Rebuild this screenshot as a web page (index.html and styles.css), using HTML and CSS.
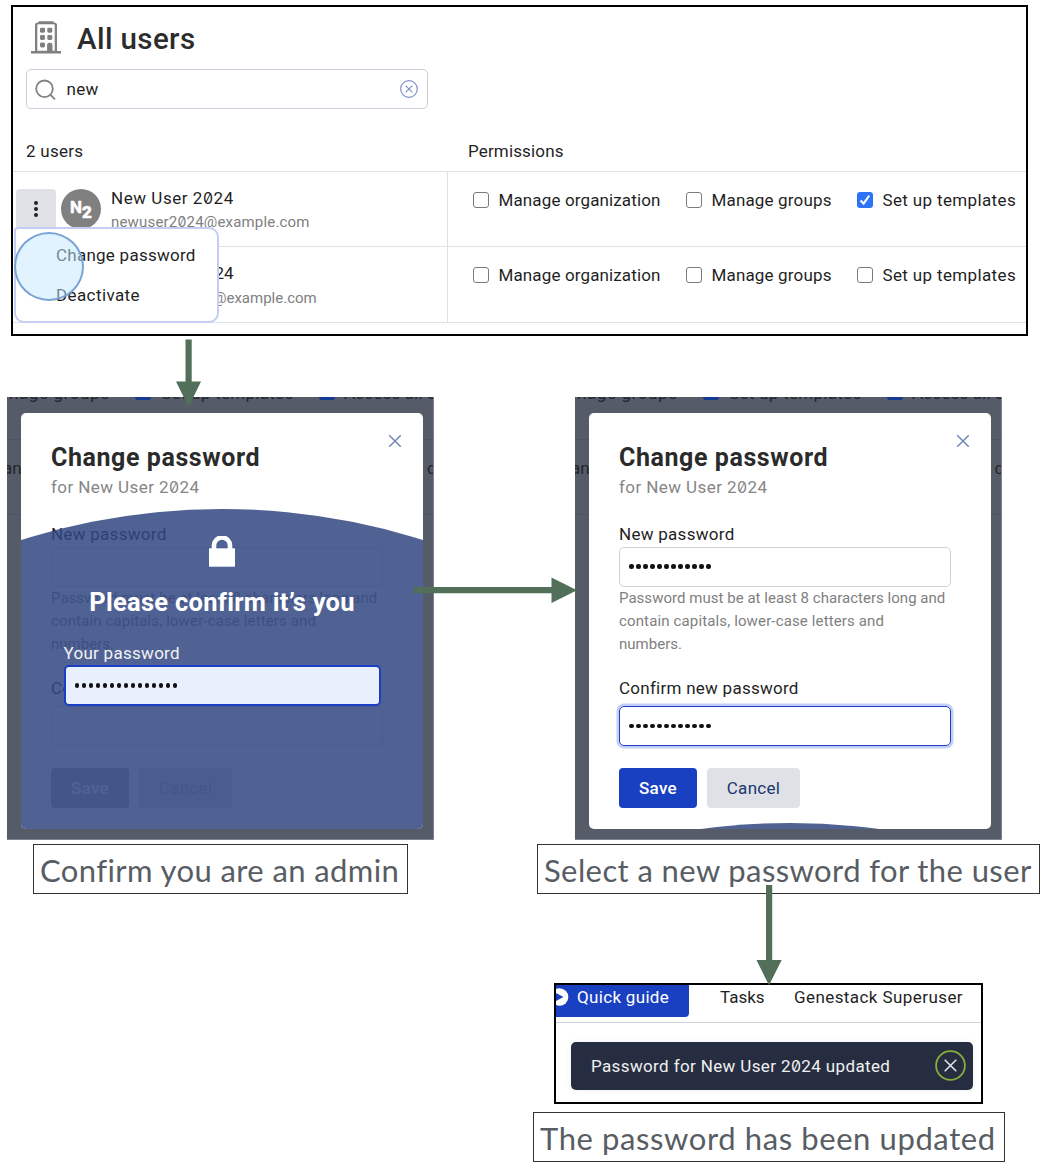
FILE: index.html
```html
<!DOCTYPE html>
<html lang="en">
<head>
<meta charset="utf-8">
<title>Changing a user password</title>
<link rel="stylesheet" href="styles.css">
</head>
<body>
<main class="canvas">

  <section class="node users">
    <header class="users-head">
      <svg class="building" width="30" height="33" viewBox="0 0 30 33" fill="#808080">
        <path fill-rule="evenodd" d="M4 30V4Q4 1.6 7 1.4L8 .3H22L23 1.4Q26 1.6 26 4V30H30V32.5H0V30ZM6.3 29.8H16.3V24Q16.3 21.8 18.8 21.8Q21.3 21.8 21.3 24V29.8H23.7V4Q23.7 3.2 22.8 3.2H7.2Q6.3 3.2 6.3 4Z"/>
        <path d="M16.3 30V24Q16.3 21.7 18.8 21.7Q21.3 21.7 21.3 24V30Z"/>
        <rect x="9" y="6.7" width="5" height="5" rx="1.4"/><rect x="16.3" y="6.7" width="5" height="5" rx="1.4"/>
        <rect x="9" y="14" width="5" height="5" rx="1.4"/><rect x="16.3" y="14" width="5" height="5" rx="1.4"/>
        <rect x="9" y="21.5" width="5" height="5" rx="1.4"/>
      </svg>
      <h1 class="users-title">All users</h1>
    </header>
    <div class="search">
      <svg width="22" height="22" viewBox="0 0 22 22" fill="none" stroke="#808080" stroke-width="1.8"><circle cx="9.5" cy="10.8" r="8.3"/><path d="M15.3 16.6L20 21.3"/></svg>
      <span class="search-text">new</span>
      <svg width="18" height="18" viewBox="0 0 18 18" fill="none" stroke="#7f93c4" stroke-width="1.2"><circle cx="9" cy="9" r="8.3"/><path d="M5.6 5.6L12.4 12.4M12.4 5.6L5.6 12.4"/></svg>
    </div>
    <div class="columns">
      <span class="count">2 users</span>
      <span class="perm-head">Permissions</span>
    </div>
    <div class="row">
      <div class="who">
        <span class="more"><i></i><i></i><i></i></span>
        <span class="avatar">N<b>2</b></span>
        <div class="id"><div class="name">New User 2<span class="z">0</span>24</div><div class="mail">newuser2<span class="z">0</span>24@example.com</div></div>
      </div>
      <div class="perms">
        <span class="box"></span><span class="p-org">Manage organization</span>
        <span class="box"></span><span class="p-grp">Manage groups</span>
        <span class="box on"><svg width="16" height="16" viewBox="0 0 16 16" fill="none" stroke="#fff" stroke-width="2.1"><path d="M3.6 8.6L6.6 11.6L12.2 3.6"/></svg></span><span class="p-tpl">Set up templates</span>
      </div>
    </div>
    <div class="row last">
      <div class="who second">
        <div class="id"><div class="name">24</div><div class="mail">@example.com</div></div>
      </div>
      <div class="perms">
        <span class="box"></span><span class="p-org">Manage organization</span>
        <span class="box"></span><span class="p-grp">Manage groups</span>
        <span class="box"></span><span class="p-tpl">Set up templates</span>
      </div>
    </div>
    <div class="menu">
      <div class="menu-item m1">Change password</div>
      <div class="menu-item m2">Deactivate</div>
    </div>
    <span class="pointer"></span>
  </section>

  <section class="node screen screen-a">
    <div class="behind">
      <div class="behind-perms"><span class="b-grp">nage groups</span><i></i><span class="b-tpl">Set up templates</span><i></i><span class="b-acc">Access all s</span></div>
      <div class="behind-row"><span>an</span><span>c</span></div>
    </div>
    <div class="modal locked">
      <svg class="close" width="14" height="14" viewBox="0 0 14 14" stroke="#7488b8" stroke-width="1.5"><path d="M1.2 1.2L12.8 12.8M12.8 1.2L1.2 12.8"/></svg>
      <h2 class="modal-title">Change password</h2>
      <p class="modal-sub">for New User 2<span class="z">0</span>24</p>
      <div class="label l-new">New password</div>
      <div class="input"></div>
      <p class="help"><span>Password must be at least 8 characters long and</span><br><span class="h2">contain capitals, lower-case letters and</span><br>numbers.</p>
      <div class="label l-conf">Confirm new password</div>
      <div class="input"></div>
      <div class="buttons"><span class="btn save">Save</span><span class="btn cancel">Cancel</span></div>
      <div class="dome"></div>
      <div class="confirm">
        <svg class="lock" width="26" height="31" viewBox="0 0 26 31"><path d="M5 13V9.5A8 8 0 0 1 21 9.5V13" fill="none" stroke="#fff" stroke-width="4.6"/><path d="M0 12.3H26V30.7H0Z" fill="#fff"/></svg>
        <h3 class="confirm-title">Please confirm it’s you</h3>
        <div class="label confirm-label">Your password</div>
        <div class="input filled"><span class="dots"><i></i><i></i><i></i><i></i><i></i><i></i><i></i><i></i><i></i><i></i><i></i><i></i><i></i><i></i><i></i></span></div>
      </div>
    </div>
  </section>

  <section class="node screen screen-b">
    <div class="behind">
      <div class="behind-perms"><span class="b-grp">nage groups</span><i></i><span class="b-tpl">Set up templates</span><i></i><span class="b-acc">Access all s</span></div>
      <div class="behind-row"><span>an</span><span>d</span></div>
    </div>
    <div class="modal">
      <svg class="close" width="14" height="14" viewBox="0 0 14 14" stroke="#7488b8" stroke-width="1.5"><path d="M1.2 1.2L12.8 12.8M12.8 1.2L1.2 12.8"/></svg>
      <h2 class="modal-title">Change password</h2>
      <p class="modal-sub">for New User 2<span class="z">0</span>24</p>
      <div class="label l-new">New password</div>
      <div class="input"><span class="dots"><i></i><i></i><i></i><i></i><i></i><i></i><i></i><i></i><i></i><i></i><i></i><i></i></span></div>
      <p class="help"><span>Password must be at least 8 characters long and</span><br><span class="h2">contain capitals, lower-case letters and</span><br>numbers.</p>
      <div class="label l-conf">Confirm new password</div>
      <div class="input focus"><span class="dots"><i></i><i></i><i></i><i></i><i></i><i></i><i></i><i></i><i></i><i></i><i></i><i></i></span></div>
      <div class="buttons"><span class="btn save">Save</span><span class="btn cancel">Cancel</span></div>
      <div class="dome"></div>
    </div>
  </section>

  <div class="node caption cap-a"><span>Confirm you are an admin</span></div>
  <div class="node caption cap-b"><span>Select a new password for the user</span></div>

  <section class="node result">
    <nav class="bar">
      <span class="guide"><svg width="13" height="18" viewBox="0 0 13 18"><circle cx="3.5" cy="9" r="8.8" fill="#fff"/><path d="M0 5L7.5 9L0 13Z" fill="#1a40c2"/></svg><span class="guide-text">Quick guide</span></span>
      <span class="tasks">Tasks</span>
      <span class="super">Genestack Superuser</span>
    </nav>
    <div class="toast">
      <span class="toast-text">Password for New User 2<span class="z">0</span>24 updated</span>
      <svg width="31" height="31" viewBox="0 0 31 31" fill="none"><circle cx="15.5" cy="15.5" r="14.4" stroke="#86ad3c" stroke-width="1.8"/><path d="M9.7 9.7L21.3 21.3M21.3 9.7L9.7 21.3" stroke="#e8e8ea" stroke-width="1.5"/></svg>
    </div>
  </section>
  <div class="node caption cap-c"><span>The password has been updated</span></div>

  <svg class="arrows" width="1044" height="1166" viewBox="0 0 1044 1166" fill="#527059">
    <path d="M185.5 339.5H191.7V381.5H201L188.6 407L176 381.5H185.5Z"/>
    <path d="M413.7 587H551.5V577.5L577 590.2L551.5 603V593.3H413.7Z"/>
    <path d="M766 885H772.2V960H781.7L769 985.3L756.5 960H766Z"/>
  </svg>
</main>
</body>
</html>
```
FILE: styles.css
```css
* { box-sizing: border-box; }
body { margin: 0; background: #fff; font-family: Roboto, "Liberation Sans", sans-serif; font-size: 17px; line-height: 20px; color: #1f1f1f; }
h1, h2, h3, p { margin: 0; }
.canvas { position: relative; width: 1044px; height: 1166px; overflow: hidden; }
.node { position: absolute; white-space: nowrap; }
.z { font-family: Inter, sans-serif; font-feature-settings: "zero"; font-size: .94em; }
.arrows { position: absolute; left: 0; top: 0; }

/* users list */
.users { left: 11px; top: 5px; width: 1017px; height: 331px; border: 2.5px solid #000; }
.users-head { display: flex; gap: 16px; padding: 14px 0 0 18px; height: 62px; }
.users-title { font-size: 29.5px; line-height: 36px; font-weight: 500; color: #2c2c2c; letter-spacing: .4px; }
.search { display: flex; align-items: center; width: 402px; height: 40px; margin-left: 13px; padding: 0 9px 0 8px; border: 1.5px solid #cdced9; border-radius: 5px; }
.search-text { flex: 1; margin-left: 9.5px; letter-spacing: .3px; }
.columns { display: flex; height: 62px; padding: 32px 0 0 13px; }
.count { width: 442px; letter-spacing: .25px; }
.perm-head { letter-spacing: .15px; }
.row { display: flex; height: 75px; border-top: 1px solid #dfe1e8; }
.row.last { height: 77px; border-bottom: 1px solid #dfe1e8; }
.who { display: flex; width: 435px; padding: 17px 0 0 3px; border-right: 1px solid #dfe1e8; }
.more { display: flex; flex-direction: column; align-items: center; justify-content: center; gap: 2.4px; width: 40px; height: 40px; border-radius: 4px; background: #dfe1e6; }
.more i { width: 4px; height: 4px; border-radius: 50%; background: #222; }
.avatar { width: 40px; height: 40px; margin-left: 5px; border-radius: 50%; background: #808080; color: #fff; font: 700 17px/36px Roboto, sans-serif; text-align: center; -webkit-text-stroke: .5px #fff; }
.avatar b { position: relative; top: 5px; }
.id { margin-left: 10px; }
.name { letter-spacing: .55px; height: 23px; line-height: 17px; padding-top: 1px; }
.mail { font-size: 15px; line-height: 20px; color: #808080; letter-spacing: .18px; }
.second .id { margin-left: 198.5px; }
.second .name { height: 24px; letter-spacing: 0; }
.second .mail { letter-spacing: 0; margin-left: -1.5px; }
.perms { display: flex; align-items: flex-start; padding: 17px 0 0 25px; }
.box { flex: none; width: 16px; height: 16px; margin-top: 3px; border: 1.5px solid #7b7b7b; border-radius: 3px; }
.box.on { border: 0; background: #2e72f6; }
.box svg { display: block; }
.p-org, .p-grp, .p-tpl { margin-left: 9.5px; line-height: 22px; }
.p-org { width: 187.5px; letter-spacing: .13px; }
.p-grp { width: 145.5px; letter-spacing: .16px; }
.p-tpl { letter-spacing: .36px; }
.menu { position: absolute; left: 1px; top: 220px; width: 205px; height: 96px; padding: 16px 0 0 40px; background: #fff; border: 2.5px solid #c4cdf2; border-radius: 4px 10px 10px 10px; }
.menu-item { height: 40px; line-height: 20px; letter-spacing: .4px; }
.m1 { letter-spacing: .25px; }
.pointer { position: absolute; left: 1px; top: 224.5px; width: 70px; height: 69px; border-radius: 50%; border: 2px solid #7ba3d6; background: rgba(193, 231, 253, .5); }

/* dialog screens */
.screen { top: 397px; width: 427px; height: 442.5px; background: #555b67; border-right: 1px solid #7d8290; border-bottom: 1px solid #7d8290; overflow: hidden; }
.screen-a { left: 7px; }
.screen-b { left: 575px; }
.behind { position: absolute; inset: 0; color: #23262d; letter-spacing: .4px; }
.behind-perms { display: flex; height: 43px; border-bottom: 1px solid #4b556a; }
.behind-perms span { flex: none; line-height: 20px; margin-top: -14px; }
.behind-perms i { flex: none; width: 16px; height: 3px; background: #163a94; border-radius: 0 0 3px 3px; }
.b-grp { width: 128px; padding-left: 2px; letter-spacing: .6px; }
.b-tpl { width: 168px; padding-left: 10px; letter-spacing: .3px; }
.b-acc { padding-left: 9px; letter-spacing: .15px; }
.behind-row { display: flex; justify-content: space-between; height: 75px; padding-top: 18px; margin: 0 -3px 0 -4px; border-bottom: 1px solid #4b556a; letter-spacing: 0; }
.modal { position: absolute; left: 14px; top: 16px; width: 402px; height: 416px; padding: 30px 30px 0; background: #fff; border-radius: 5px; overflow: hidden; }
.close { position: absolute; left: 367px; top: 21px; }
.modal-title { font-size: 25px; line-height: 30px; font-weight: 700; color: #2b2b2b; letter-spacing: .58px; }
.modal-sub { margin-top: 3px; color: #868686; line-height: 22px; letter-spacing: .42px; }
.label { line-height: 22px; letter-spacing: .28px; }
.l-new { margin-top: 24px; }
.input { display: flex; align-items: center; width: 332px; height: 40px; margin-top: 1.5px; padding-left: 9px; border: 1.5px solid #cfd0da; border-radius: 5px; }
.input.focus { border-color: #1f3cc4; box-shadow: 0 0 0 2.5px #c3cff5; }
.dots { display: flex; gap: 2.5px; }
.dots i { width: 4.5px; height: 4.5px; border-radius: 50%; background: #111; }
.help { margin-top: .7px; font-size: 15px; line-height: 22.7px; color: #808080; letter-spacing: .03px; }
.help .h2 { letter-spacing: .14px; }
.l-conf { margin-top: 22px; margin-bottom: 6.8px; letter-spacing: .26px; }
.buttons { display: flex; gap: 10px; margin-top: 22px; }
.btn { height: 40px; line-height: 40px; text-align: center; border-radius: 4px; letter-spacing: .3px; }
.save { width: 78px; background: #1a40c2; color: #fff; font-weight: 500; }
.cancel { width: 93px; background: #dfe1e6; color: #20366f; }
.locked .save { background: #adadad; }
.locked .cancel { background: #dcdcdc; color: #b0b0b0; }
.dome { position: absolute; left: -466px; top: 410px; width: 1334px; height: 1334px; border-radius: 50%; background: #506294; }
.locked .dome { top: 96px; background: rgba(49, 70, 129, .85); }
.confirm { position: absolute; left: 42.5px; top: 123px; width: 317px; display: flex; flex-direction: column; align-items: center; color: #fff; }
.confirm-title { margin-top: 19px; font-size: 25.5px; line-height: 32px; font-weight: 700; letter-spacing: .28px; }
.confirm-label { align-self: flex-start; margin-top: 24px; color: #f2f2f2; }
.confirm .filled { align-self: flex-start; width: 317px; height: 41px; margin-top: 1px; background: #e8effd; border: 2px solid #1a3fc4; }

/* captions */
.caption { height: 50px; padding-left: 6px; border: 1.5px solid #333; color: #585d64; font-family: Lato, sans-serif; font-size: 31px; line-height: 50px; }
.cap-a { left: 33px; top: 844px; width: 375px; letter-spacing: .4px; }
.cap-b { left: 537px; top: 844px; width: 503px; letter-spacing: .4px; }
.cap-c { left: 533px; top: 1112px; width: 472px; letter-spacing: .6px; }

/* result */
.result { left: 554px; top: 983px; width: 429px; height: 121px; border: 2.5px solid #000; }
.bar { display: flex; height: 38px; border-bottom: 1px solid #d0d2dc; line-height: 24px; }
.guide { display: flex; align-items: flex-start; width: 133px; height: 32px; background: #1a40c2; color: #fff; border-radius: 0 0 4px 0; }
.guide svg { margin-top: 3px; }
.guide-text { margin-left: 8px; letter-spacing: .32px; }
.tasks { margin-left: 31px; width: 74px; }
.super { letter-spacing: .42px; }
.toast { display: flex; align-items: center; justify-content: space-between; width: 402px; height: 48px; margin: 19px 0 0 15px; padding: 0 7px 2px 20px; background: #262d41; border-radius: 5px; color: #f0f0f0; box-shadow: 0 0 8px rgba(0, 0, 0, .06); }
.toast-text { letter-spacing: .37px; padding-top: 2px; }
```
